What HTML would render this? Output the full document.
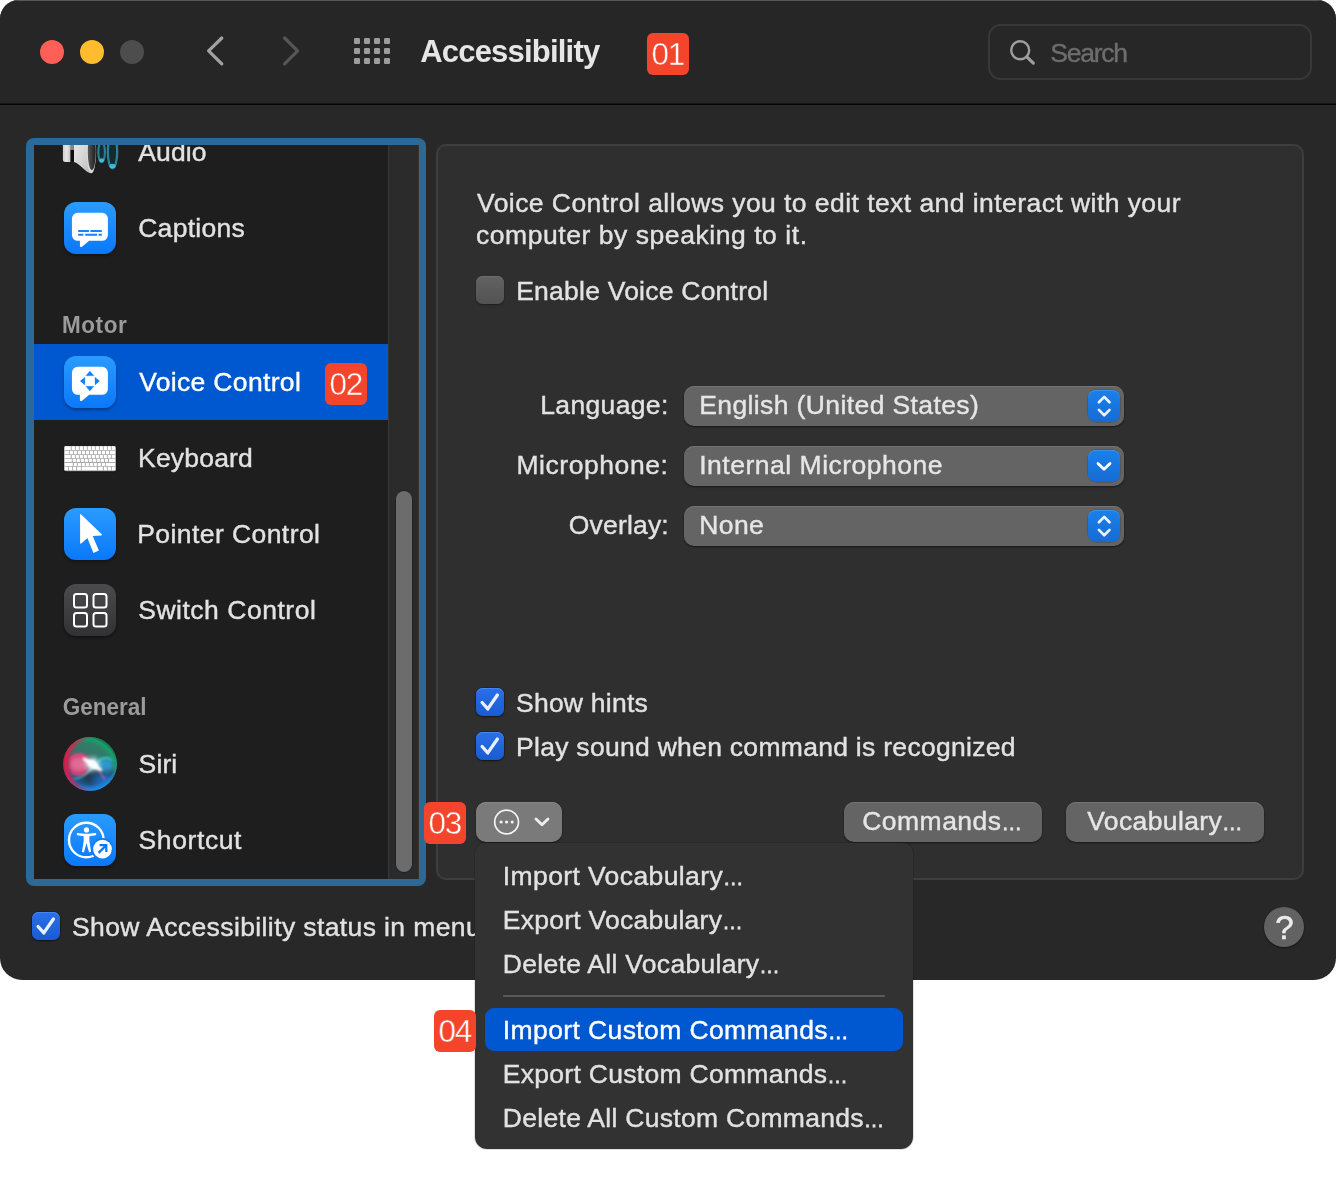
<!DOCTYPE html>
<html lang="en">
<head>
<meta charset="utf-8">
<title>Accessibility</title>
<style>
*{box-sizing:border-box;margin:0;padding:0}
html,body{width:1336px;height:1178px;background:#fff;overflow:hidden}
body{position:relative;font-family:"Liberation Sans",sans-serif;color:#dfdfdf;-webkit-font-smoothing:antialiased}
.abs,.t,.badge,.ico{position:absolute}
.t{-webkit-text-stroke:.4px;white-space:nowrap;font-size:26.500px;line-height:32px;height:32px;color:#e2e2e2}
#win{will-change:transform;position:absolute;left:0;top:0;width:1336px;height:980px;background:#282828;border-radius:19px 19px 22px 22px;overflow:hidden}
#titlebar{position:absolute;left:0;top:0;width:1336px;height:104px;background:#262626;box-shadow:inset 0 1px 0 #585858}
#tsep{position:absolute;left:0;top:103px;width:1336px;height:2px;background:linear-gradient(rgba(0,0,0,.45) 0 1px,#060606 1px 2px)}
.tl{position:absolute;top:40px;width:24px;height:24px;border-radius:50%}
.badge{background:#f3452c;color:#fff;border-radius:6px;font-size:31.500px;line-height:42px;text-align:center;width:41.600px;height:41.700px;letter-spacing:-1.200px;-webkit-text-stroke:.45px #f3452c;overflow:hidden}
#search{position:absolute;left:988px;top:24px;width:324px;height:56px;border:2px solid #383838;border-radius:13px;background:#272727}
#ring{position:absolute;left:26px;top:138px;width:400px;height:748px;background:#2d6996;border-radius:8px}
#list{position:absolute;left:34px;top:145px;width:354px;height:734px;background:#1e1e1e;overflow:hidden}
#track{position:absolute;left:388px;top:145px;width:31px;height:734px;background:#2b2b2b;border-left:1px solid #383838;border-right:1px solid #353535}
#thumb{position:absolute;left:396px;top:491px;width:16px;height:381px;border-radius:8px;background:#6c6c6c;box-shadow:0 0 0 1px rgba(0,0,0,.22)}
.row{position:absolute;left:0;width:354px;height:76px}
.row .t{left:104px;top:21.840px}
.sec{-webkit-text-stroke:0;transform:scaleY(1.05);transform-origin:50% 75%;position:absolute;left:28px;font-size:22.500px;font-weight:bold;color:#9b9b9b;line-height:28px;white-space:nowrap}
.ico{left:30px;top:12px;width:52px;height:52px}
.blue{border-radius:12px;background:linear-gradient(#2a9bff,#0a78fb);box-shadow:0 2px 3px rgba(0,0,0,.35)}
#pane{position:absolute;left:436px;top:144px;width:868px;height:736px;background:#2f2f2f;border:2px solid #3e3e3e;border-radius:10px}
.cb{position:absolute;width:28px;height:28px;border-radius:6.500px}
.cb.off{background:linear-gradient(#626262,#525252);box-shadow:inset 0 1px 0 #6c6c6c,0 1px 2px rgba(0,0,0,.4)}
.cb.on{background:linear-gradient(#2a70ea,#195bd1);box-shadow:inset 0 1px 0 #4585f3,0 0 0 .5px rgba(0,0,0,.35),0 1px 2px rgba(0,0,0,.45)}
.pop{position:absolute;left:684px;width:440px;height:40px;border-radius:10px;background:#646464;box-shadow:inset 0 1px 0 #747474,0 1px 2px rgba(0,0,0,.5)}
.pop .t{left:16px;top:2.840px;color:#e6e6e6}
.step{position:absolute;right:4px;top:4px;width:32px;height:32px;border-radius:8px;background:linear-gradient(#1b80ea,#166bd3);box-shadow:inset 0 1px 0 #3a92f0,0 0 0 .5px rgba(0,0,0,.25)}
.btn{position:absolute;top:802px;height:40px;border-radius:10px;background:#646464;box-shadow:inset 0 1px 0 #747474,0 1px 2px rgba(0,0,0,.5)}
#menu{will-change:transform;position:absolute;left:475px;top:843px;width:438px;height:306px;background:#323232;border-radius:10px 10px 12px 12px;box-shadow:0 0 0 1px rgba(0,0,0,.12)}
#menu .t{left:28px;color:#e2e2e2}
#hl{position:absolute;left:10px;top:164.500px;width:418px;height:43.400px;border-radius:9px;background:#0058d0}
.el{font-size:20.500px;-webkit-text-stroke:.75px;letter-spacing:0}
/*FIT*/
#r1{letter-spacing:0.10px;margin-left:0.3px}
#sa{letter-spacing:0.39px}
#title{letter-spacing:-0.80px;margin-left:-0.8px}
#searcht{letter-spacing:-1.24px;margin-left:-0.8px}
#r2{letter-spacing:0.29px;margin-left:0.2px}
#r3{letter-spacing:0.33px;margin-left:1.2px}
#r4{letter-spacing:0.20px;margin-left:0.0px}
#r5{letter-spacing:0.43px;margin-left:-0.8px}
#r6{letter-spacing:0.52px;margin-left:0.2px}
#r7{letter-spacing:0.13px;margin-left:0.6px}
#r8{letter-spacing:0.60px;margin-left:0.6px}
#h1{letter-spacing:0.55px;margin-left:0.0px}
#h2{letter-spacing:-0.03px;margin-left:0.8px}
#d1{letter-spacing:0.44px;margin-left:1.0px}
#d2{letter-spacing:0.55px;margin-left:0.0px}
#evc{letter-spacing:0.23px;margin-left:-0.8px}
#l1{letter-spacing:0.35px;margin-left:-0.8px}
#l2{letter-spacing:0.56px;margin-left:-0.6px}
#l3{letter-spacing:0.17px;margin-left:-0.2px}
#p1{letter-spacing:0.39px;margin-left:-0.8px}
#p2{letter-spacing:0.51px;margin-left:-0.8px}
#p3{letter-spacing:0.40px;margin-left:-0.8px}
#c1{letter-spacing:0.24px;margin-left:-1.0px}
#c2{letter-spacing:0.29px;margin-left:-1.0px}
#b1{letter-spacing:0.48px;margin-left:-0.8px}
#b2{letter-spacing:0.38px;margin-left:0.2px}
#m1{letter-spacing:0.39px;margin-left:-0.2px}
#m2{letter-spacing:0.25px;margin-left:-0.2px}
#m3{letter-spacing:0.29px;margin-left:-0.2px}
#m4{letter-spacing:0.39px;margin-left:-0.2px}
#m5{letter-spacing:0.29px;margin-left:-0.2px}
#m6{letter-spacing:0.29px;margin-left:-0.2px}
/*ENDFIT*/
</style>
</head>
<body>
<div id="win">
  <div id="titlebar">
    <div class="tl" style="left:40px;background:#fe5f57"></div>
    <div class="tl" style="left:80px;background:#febc2e"></div>
    <div class="tl" style="left:120px;background:#4d4d4d"></div>
    <svg class="abs" style="left:200px;top:30px" width="32" height="42" viewBox="0 0 32 42"><path d="M21.800 8 L8.600 20.900 L21.800 33.800" fill="none" stroke="#a2a2a2" stroke-width="3.200" stroke-linecap="round" stroke-linejoin="round"/></svg>
    <svg class="abs" style="left:275px;top:30px" width="32" height="42" viewBox="0 0 32 42"><path d="M9.600 8 L22.600 20.900 L9.600 33.800" fill="none" stroke="#565656" stroke-width="3.200" stroke-linecap="round" stroke-linejoin="round"/></svg>
    <svg class="abs" style="left:354px;top:38.400px" width="36" height="26" viewBox="0 0 36 26" fill="#9c9c9c">
      <rect x="0" y="0" width="6" height="6" rx="1.3"/><rect x="10" y="0" width="6" height="6" rx="1.3"/><rect x="20" y="0" width="6" height="6" rx="1.3"/><rect x="30" y="0" width="6" height="6" rx="1.3"/>
      <rect x="0" y="10" width="6" height="6" rx="1.3"/><rect x="10" y="10" width="6" height="6" rx="1.3"/><rect x="20" y="10" width="6" height="6" rx="1.3"/><rect x="30" y="10" width="6" height="6" rx="1.3"/>
      <rect x="0" y="20" width="6" height="6" rx="1.3"/><rect x="10" y="20" width="6" height="6" rx="1.3"/><rect x="20" y="20" width="6" height="6" rx="1.3"/><rect x="30" y="20" width="6" height="6" rx="1.3"/>
    </svg>
    <div class="t" id="title" style="left:421px;top:34.280px;-webkit-text-stroke:0;font-size:31px;font-weight:bold;line-height:36px;height:36px;color:#e6e6e6">Accessibility</div>
    <div class="badge" style="left:647px;top:33px">01</div>
    <div id="search">
      <svg class="abs" style="left:18px;top:12px" width="30" height="30" viewBox="0 0 30 30"><circle cx="12.200" cy="12.200" r="9" fill="none" stroke="#9e9e9e" stroke-width="2.400"/><path d="M18.800 18.800 L25.300 25.100" stroke="#9e9e9e" stroke-width="3.200" stroke-linecap="round"/></svg>
      <div class="t" id="searcht" style="left:61px;top:10.840px;color:#6d6d6d">Search</div>
    </div>
  </div>
  <div id="tsep"></div>
  <div id="ring"></div>
  <div id="track"></div>
  <div id="thumb"></div>
  <div id="list">
    <!-- rows: list origin y=145; row top = center-38-145 -->
    <div class="row" style="top:-31px">
      <svg class="ico" style="left:26px;top:10px;width:60px;height:56px" viewBox="0 0 60 56">
        <defs>
          <linearGradient id="spk" x1="0" x2="1"><stop offset="0" stop-color="#cfcfcf"/><stop offset=".5" stop-color="#e6e6e6"/><stop offset="1" stop-color="#c2c2c2"/></linearGradient>
          <linearGradient id="spk2" x1="0" x2="1" y1="0" y2="1"><stop offset="0" stop-color="#ebebeb"/><stop offset=".6" stop-color="#d2d2d2"/><stop offset="1" stop-color="#b0b0b0"/></linearGradient>
          <linearGradient id="spk3" x1="0" x2="1"><stop offset="0" stop-color="#5a5a5a"/><stop offset=".5" stop-color="#3a3a3a"/><stop offset="1" stop-color="#1c1c1c"/></linearGradient>
        </defs>
        <rect x="10" y="17" width="4.500" height="20.500" fill="#0d0d0d"/>
        <rect x="10" y="17" width="4.500" height="9" fill="#7d838a"/>
        <path d="M5.400 17 H10.400 V38 H5.400 A2.500 2.500 0 0 1 2.900 35.500 V19.500 A2.500 2.500 0 0 1 5.400 17z" fill="url(#spk)"/>
        <path d="M14 38 C19.500 39.500 24 46.500 29 48.800 Q31.500 49.800 33 48 L33 8 Q31.500 6.200 29 7.200 C24 9.500 19.500 16.500 14 18 Z" fill="url(#spk2)"/>
        <ellipse cx="31.300" cy="28" rx="4.800" ry="21.200" fill="#d9d9d9"/>
        <ellipse cx="31.800" cy="28" rx="4" ry="18" fill="url(#spk3)"/>
        <ellipse cx="41.600" cy="28" rx="3.300" ry="10.300" fill="#103a47" fill-opacity=".5" stroke="#2b98b2" stroke-opacity=".8" stroke-width="2.100"/>
        <ellipse cx="52.500" cy="28" rx="4.700" ry="16.300" fill="#103a47" fill-opacity=".4" stroke="#2b98b2" stroke-opacity=".8" stroke-width="2.300"/>
        <ellipse cx="41.600" cy="36.300" rx="2.300" ry="2" fill="#48d4ee" fill-opacity=".8"/>
        <ellipse cx="52.500" cy="42" rx="3" ry="2.300" fill="#48d4ee" fill-opacity=".8"/>
      </svg>
      <div class="t" id="r1">Audio</div>
    </div>
    <div class="row" style="top:45px">
      <div class="ico blue"></div>
      <svg class="ico" viewBox="0 0 52 52"><path d="M13.750 10.800 H38.100 A5.800 5.800 0 0 1 43.900 16.600 V33.050 A5.800 5.800 0 0 1 38.100 38.850 H25.200 L18.300 44.500 Q15.900 46 15.900 43.500 V38.850 H13.750 A5.800 5.800 0 0 1 7.950 33.050 V16.600 A5.800 5.800 0 0 1 13.750 10.800z" fill="#fff"/><path d="M14.200 29 H25 M26.400 29 H37.800 M14.200 32.700 H19.400 M21.200 32.700 H33.200 M34.600 32.700 H37.800" stroke="#1584fd" stroke-width="2"/></svg>
      <div class="t" id="r2">Captions</div>
    </div>
    <div class="sec" id="h1" style="top:166.600px">Motor</div>
    <div class="row" style="top:199px;background:#0058d0">
      <div class="ico blue"></div>
      <svg class="ico" viewBox="0 0 52 52"><path d="M13.750 10.800 H38.100 A5.800 5.800 0 0 1 43.900 16.600 V33.050 A5.800 5.800 0 0 1 38.100 38.850 H25.200 L18.300 44.500 Q15.900 46 15.900 43.500 V38.850 H13.750 A5.800 5.800 0 0 1 7.950 33.050 V16.600 A5.800 5.800 0 0 1 13.750 10.800z" fill="#fff"/><path d="M25.900 15.100 L29.900 19.800 H21.900z M25.900 35 L29.900 30.300 H21.900z M16.200 25.050 L20.900 21.200 V28.900z M35.600 25.050 L31 21.200 V28.900z" fill="#0f80fc" stroke="#0f80fc" stroke-width=".3" stroke-linejoin="round"/></svg>
      <div class="t" id="r3" style="color:#fff">Voice Control</div>
      <div class="badge" style="left:291px;top:19px">02</div>
    </div>
    <div class="row" style="top:275px">
      <svg class="ico" style="top:26px;height:27px;overflow:visible" viewBox="0 0 52 27">
        <rect x="-.3" y=".2" width="52.600" height="26" rx="2.200" fill="#000" fill-opacity=".55"/>
        <rect x="0" y="0" width="52" height="25.200" rx="1.800" fill="#a9a9a9"/>
        <path d="M0.7 0.3h6.1v3.7h-6.1zM7.8 0.3h3.1v3.7h-3.1zM11.8 0.3h3.1v3.7h-3.1zM15.8 0.3h3.1v3.7h-3.1zM19.8 0.3h3.1v3.7h-3.1zM23.8 0.3h3.1v3.7h-3.1zM27.8 0.3h3.1v3.7h-3.1zM31.8 0.3h3.1v3.7h-3.1zM35.8 0.3h3.1v3.7h-3.1zM39.8 0.3h3.1v3.7h-3.1zM43.8 0.3h3.1v3.7h-3.1zM47.8 0.3h3.3v3.7h-3.3zM0.7 4.8h4.2v3.4h-4.2zM5.8 4.8h3.1v3.4h-3.1zM9.8 4.8h3.1v3.4h-3.1zM13.9 4.8h3.1v3.4h-3.1zM17.9 4.8h3.1v3.4h-3.1zM21.9 4.8h3.1v3.4h-3.1zM25.9 4.8h3.1v3.4h-3.1zM29.9 4.8h3.1v3.4h-3.1zM33.9 4.8h3.1v3.4h-3.1zM37.9 4.8h3.1v3.4h-3.1zM41.9 4.8h3.1v3.4h-3.1zM45.8 4.8h5.3v3.4h-5.3zM0.7 8.9h6.1v3.4h-6.1zM7.8 8.9h3.1v3.4h-3.1zM11.8 8.9h3.1v3.4h-3.1zM15.8 8.9h3.1v3.4h-3.1zM19.8 8.9h3.1v3.4h-3.1zM23.8 8.9h3.1v3.4h-3.1zM27.8 8.9h3.1v3.4h-3.1zM31.8 8.9h3.1v3.4h-3.1zM35.8 8.9h3.1v3.4h-3.1zM39.8 8.9h3.1v3.4h-3.1zM43.8 8.9h3.1v3.4h-3.1zM47.8 8.9h3.3v3.4h-3.3zM0.7 12.9h7.1v3.1h-7.1zM8.8 12.9h3.1v3.1h-3.1zM12.8 12.9h3.1v3.1h-3.1zM16.8 12.9h3.1v3.1h-3.1zM20.8 12.9h3.1v3.1h-3.1zM24.8 12.9h3.1v3.1h-3.1zM28.8 12.9h3.1v3.1h-3.1zM32.8 12.9h3.1v3.1h-3.1zM36.8 12.9h3.1v3.1h-3.1zM40.9 12.9h3.1v3.1h-3.1zM44.9 12.9h6.2v3.1h-6.2zM0.7 17.0h8.1v3.1h-8.1zM9.8 17.0h3.1v3.1h-3.1zM13.8 17.0h3.1v3.1h-3.1zM17.8 17.0h3.1v3.1h-3.1zM21.8 17.0h3.1v3.1h-3.1zM25.8 17.0h3.1v3.1h-3.1zM29.8 17.0h3.1v3.1h-3.1zM33.8 17.0h3.1v3.1h-3.1zM37.9 17.0h3.1v3.1h-3.1zM41.8 17.0h9.3v3.1h-9.3zM0.7 20.8h3.3v3.4h-3.3zM4.9 20.8h3.1v3.4h-3.1zM8.8 20.8h3.2v3.4h-3.2zM12.9 20.8h4.0v3.4h-4.0zM17.8 20.8h15.1v3.4h-15.1zM33.9 20.8h5.0v3.4h-5.0zM39.9 20.8h3.0v3.4h-3.0zM43.8 20.8h3.1v3.4h-3.1zM47.8 20.8h3.4v3.4h-3.4z" fill="#fff"/>
      </svg>
      <div class="t" id="r4">Keyboard</div>
    </div>
    <div class="row" style="top:351px">
      <div class="ico blue"></div>
      <svg class="ico" viewBox="0 0 52 52"><path d="M16.100 6.900 Q16.100 5.500 17.200 6.400 L37.700 26.300 Q38.500 27.400 37.200 27.500 L28.700 27.900 L34.900 42.600 L29.400 44.900 L23.400 30 L17.500 35.300 Q16.100 36.300 16.100 34.800z" fill="#fff"/></svg>
      <div class="t" id="r5">Pointer Control</div>
    </div>
    <div class="row" style="top:427px">
      <div class="ico" style="border-radius:12px;background:linear-gradient(#4b4b4d,#323234);box-shadow:0 2px 3px rgba(0,0,0,.4)"></div>
      <svg class="ico" viewBox="0 0 52 52" fill="none" stroke="#fff" stroke-width="2"><rect x="10" y="10" width="13" height="13.500" rx="2.500"/><rect x="29.500" y="10" width="13" height="13.500" rx="2.500"/><rect x="10" y="29" width="13" height="13.500" rx="2.500"/><rect x="29.500" y="29" width="13" height="13.500" rx="2.500"/></svg>
      <div class="t" id="r6">Switch Control</div>
    </div>
    <div class="sec" id="h2" style="top:548.600px">General</div>
    <div class="row" style="top:581px">
      <svg class="ico" style="left:29px;top:11px;width:54px;height:54px" viewBox="0 0 54 54">
        <defs>
          <clipPath id="oc"><circle cx="27" cy="27" r="27"/></clipPath>
          <filter id="bl1" x="-50%" y="-50%" width="200%" height="200%"><feGaussianBlur stdDeviation="2.200"/></filter>
          <filter id="bl2" x="-50%" y="-50%" width="200%" height="200%"><feGaussianBlur stdDeviation="1.100"/></filter>
          <filter id="bl3" x="-50%" y="-50%" width="200%" height="200%"><feGaussianBlur stdDeviation="3.500"/></filter>
          <linearGradient id="s0" x1=".75" y1="0" x2=".4" y2="1"><stop offset="0" stop-color="#2f8a68"/><stop offset=".45" stop-color="#356f68"/><stop offset=".62" stop-color="#26465c"/><stop offset="1" stop-color="#1c62b4"/></linearGradient>
          <radialGradient id="s1" cx=".64" cy=".5" r=".64"><stop offset=".76" stop-color="#e01f4c" stop-opacity="0"/><stop offset=".93" stop-color="#e01f4c" stop-opacity=".95"/><stop offset="1" stop-color="#b01a40"/></radialGradient>
          <radialGradient id="s2" cx=".38" cy=".64" r=".66"><stop offset=".8" stop-color="#16a06a" stop-opacity="0"/><stop offset=".95" stop-color="#16a06a" stop-opacity=".95"/><stop offset="1" stop-color="#0f7f55"/></radialGradient>
          <radialGradient id="s3" cx=".46" cy=".3" r=".72"><stop offset=".8" stop-color="#1f8fe6" stop-opacity="0"/><stop offset=".95" stop-color="#1f8fe6" stop-opacity=".95"/><stop offset="1" stop-color="#1a6fc0"/></radialGradient>
          <radialGradient id="s4" cx=".5" cy=".5" r=".5"><stop offset="0" stop-color="#fff"/><stop offset=".45" stop-color="#fff" stop-opacity=".95"/><stop offset="1" stop-color="#dff" stop-opacity="0"/></radialGradient>
        </defs>
        <g clip-path="url(#oc)">
          <rect width="54" height="54" fill="url(#s0)"/>
          <ellipse cx="29" cy="39" rx="11" ry="8" fill="#22384c" filter="url(#bl3)"/>
          <ellipse cx="42" cy="44" rx="12" ry="8" fill="#1d6fd0" fill-opacity=".8" filter="url(#bl3)"/>
          <ellipse cx="16" cy="27.500" rx="11.500" ry="10.500" fill="#d8487a" filter="url(#bl1)"/>
          <ellipse cx="15.500" cy="27" rx="8.500" ry="6.500" fill="#e27a9c" fill-opacity=".7" filter="url(#bl1)"/>
          <path d="M6 24 C8 17 18 16 24 21" fill="none" stroke="#ff3f7c" stroke-width="1.600" filter="url(#bl2)"/>
          <path d="M8 35 C14 40 22 38 27 32" fill="none" stroke="#ff3f7c" stroke-width="1.400" filter="url(#bl2)"/>
          <ellipse cx="42.500" cy="28" rx="8.500" ry="6.500" transform="rotate(-12 42.500 28)" fill="#2a9de0" fill-opacity=".85" filter="url(#bl1)"/>
          <path d="M34 27 C37 20 47 19 50 24" fill="none" stroke="#2fd0b8" stroke-width="1.800" filter="url(#bl2)"/>
          <path d="M10 42 C18 42 26 36 30 29" fill="none" stroke="#38c9c0" stroke-width="1.600" stroke-opacity=".8" filter="url(#bl2)"/>
          <path d="M34 31 C38 36 40 40 42 43" fill="none" stroke="#e0608c" stroke-width="1.600" stroke-opacity=".8" filter="url(#bl2)"/>
          <circle cx="27" cy="27" r="27" fill="url(#s2)"/>
          <circle cx="27" cy="27" r="27" fill="url(#s3)"/>
          <circle cx="27" cy="27" r="27" fill="url(#s1)"/>
          <ellipse cx="29.500" cy="27.300" rx="8.500" ry="8" fill="#c8f6ff" fill-opacity=".5" filter="url(#bl1)"/>
          <ellipse cx="29.500" cy="27.300" rx="12" ry="2.300" transform="rotate(33 29.500 27.300)" fill="#fff" filter="url(#bl2)"/>
          <ellipse cx="29.800" cy="27.300" rx="5.600" ry="4" transform="rotate(33 29.800 27.300)" fill="#fff" filter="url(#bl2)"/>
          <ellipse cx="29.500" cy="27.300" rx="2" ry="7" transform="rotate(20 29.500 27.300)" fill="#e8fbff" fill-opacity=".4" filter="url(#bl2)"/>
        </g>
      </svg>
      <div class="t" id="r7">Siri</div>
    </div>
    <div class="row" style="top:657px">
      <div class="ico blue"></div>
      <svg class="ico" viewBox="0 0 52 52"><circle cx="22.300" cy="26" r="17.300" fill="none" stroke="#fff" stroke-width="2.400"/><circle cx="22.500" cy="15.900" r="2.600" fill="#fff"/><path d="M12.800 19.500 Q12.800 18.900 13.400 19 L20.500 19.800 H24.500 L31.600 19 Q32.200 18.900 32.200 19.500 V20.600 Q32.200 21.200 31.600 21.300 L25.400 22.200 V27 L27 37.400 Q27.100 38 26.500 38.100 L25.600 38.200 Q25.100 38.200 24.900 37.700 L22.500 29.200 L20.100 37.700 Q19.900 38.200 19.400 38.200 L18.500 38.100 Q17.900 38 18 37.400 L19.700 27 V22.200 L13.400 21.300 Q12.800 21.200 12.800 20.600z" fill="#fff"/><circle cx="38.500" cy="35.100" r="11.100" fill="#0d7dfc"/><circle cx="38.500" cy="35.100" r="9.350" fill="#fff"/><path d="M34.600 38.900 L42 31.500 M35.600 31.200 H42.300 V37.900" fill="none" stroke="#0a78fb" stroke-width="2.200"/></svg>
      <div class="t" id="r8">Shortcut</div>
    </div>
  </div>
  <div id="pane"></div>
  <div class="t" id="d1" style="left:476px;top:186.84px">Voice Control allows you to edit text and interact with your</div>
  <div class="t" id="d2" style="left:476px;top:218.84px">computer by speaking to it.</div>
  <div class="cb off" style="left:476px;top:276px"></div>
  <div class="t" id="evc" style="left:517px;top:274.84px">Enable Voice Control</div>

  <div class="t" id="l1" style="left:541px;top:388.84px">Language:</div>
  <div class="t" id="l2" style="left:517px;top:448.84px">Microphone:</div>
  <div class="t" id="l3" style="left:569px;top:508.84px">Overlay:</div>
  <div class="pop" style="top:386px"><div class="t" id="p1">English (United States)</div><div class="step"><svg width="32" height="32" viewBox="0 0 32 32"><path d="M10.900 12.200 L16.200 6.900 L21.500 12.200 M10.900 19.900 L16.200 25.200 L21.500 19.900" fill="none" stroke="#eaf2fd" stroke-width="2.700" stroke-linecap="round" stroke-linejoin="round"/></svg></div></div>
  <div class="pop" style="top:446px"><div class="t" id="p2">Internal Microphone</div><div class="step"><svg width="32" height="32" viewBox="0 0 32 32"><path d="M10 13.500 L16 19.300 L22 13.500" fill="none" stroke="#fff" stroke-width="2.800" stroke-linecap="round" stroke-linejoin="round"/></svg></div></div>
  <div class="pop" style="top:506px"><div class="t" id="p3">None</div><div class="step"><svg width="32" height="32" viewBox="0 0 32 32"><path d="M10.900 12.200 L16.200 6.900 L21.500 12.200 M10.900 19.900 L16.200 25.200 L21.500 19.900" fill="none" stroke="#eaf2fd" stroke-width="2.700" stroke-linecap="round" stroke-linejoin="round"/></svg></div></div>

  <div class="cb on" style="left:476px;top:688px"><svg width="28" height="28" viewBox="0 0 28 28"><path d="M6.100 14.500 L11.800 20.900 L21.400 7" fill="none" stroke="#e9f0fd" stroke-width="3.300" stroke-linecap="round" stroke-linejoin="round"/></svg></div>
  <div class="t" id="c1" style="left:517px;top:686.84px">Show hints</div>
  <div class="cb on" style="left:476px;top:732px"><svg width="28" height="28" viewBox="0 0 28 28"><path d="M6.100 14.500 L11.800 20.900 L21.400 7" fill="none" stroke="#e9f0fd" stroke-width="3.300" stroke-linecap="round" stroke-linejoin="round"/></svg></div>
  <div class="t" id="c2" style="left:517px;top:730.84px">Play sound when command is recognized</div>

  <div class="badge" style="left:424px;top:802px">03</div>
  <div class="btn" style="left:476px;width:86px;background:#7a7a7a;box-shadow:inset 0 1px 0 #868686,0 1px 2px rgba(0,0,0,.5)">
    <svg class="abs" style="left:16px;top:6px" width="28" height="28" viewBox="0 0 28 28"><circle cx="14.600" cy="14" r="11.900" fill="none" stroke="#f2f2f2" stroke-width="1.700"/><circle cx="9.100" cy="14" r="1.600" fill="#f2f2f2"/><circle cx="14.600" cy="14" r="1.600" fill="#f2f2f2"/><circle cx="20.200" cy="14" r="1.600" fill="#f2f2f2"/></svg>
    <svg class="abs" style="left:56px;top:12px" width="20" height="16" viewBox="0 0 20 16"><path d="M4 5 L10 10.800 L16 5" fill="none" stroke="#efefef" stroke-width="2.800" stroke-linecap="round" stroke-linejoin="round"/></svg>
  </div>
  <div class="btn" style="left:844px;width:198px"><div class="t" id="b1" style="left:19px;top:2.84px;color:#e6e6e6">Commands<span class="el">…</span></div></div>
  <div class="btn" style="left:1066px;width:198px"><div class="t" id="b2" style="left:21px;top:2.84px;color:#e6e6e6">Vocabulary<span class="el">…</span></div></div>

  <div class="cb on" style="left:32px;top:912px"><svg width="28" height="28" viewBox="0 0 28 28"><path d="M6.100 14.500 L11.800 20.900 L21.400 7" fill="none" stroke="#e9f0fd" stroke-width="3.300" stroke-linecap="round" stroke-linejoin="round"/></svg></div>
  <div class="t" id="sa" style="left:72px;top:910.84px">Show Accessibility status in menu bar</div>
  <div class="abs" style="left:1264px;top:907px;width:40px;height:40px;border-radius:50%;background:#626262;box-shadow:0 1px 2px rgba(0,0,0,.5)"><div class="t" style="left:0;top:.560px;width:40px;height:40px;line-height:40px;text-align:center;font-size:33px;-webkit-text-stroke:.55px;color:#ececec;padding-left:1px">?</div></div>
</div>
<div id="menu">
  <div class="t" id="m1" style="top:16.84px">Import Vocabulary<span class="el">…</span></div>
  <div class="t" id="m2" style="top:60.84px">Export Vocabulary<span class="el">…</span></div>
  <div class="t" id="m3" style="top:104.84px">Delete All Vocabulary<span class="el">…</span></div>
  <div class="abs" style="left:28px;top:152px;width:382px;height:2px;background:#585858"></div>
  <div id="hl"></div>
  <div class="t" id="m4" style="top:170.84px;color:#fff">Import Custom Commands<span class="el">…</span></div>
  <div class="t" id="m5" style="top:214.84px">Export Custom Commands<span class="el">…</span></div>
  <div class="t" id="m6" style="top:258.84px">Delete All Custom Commands<span class="el">…</span></div>
</div>
<div class="badge" style="left:434px;top:1010px">04</div>
</body>
</html>
